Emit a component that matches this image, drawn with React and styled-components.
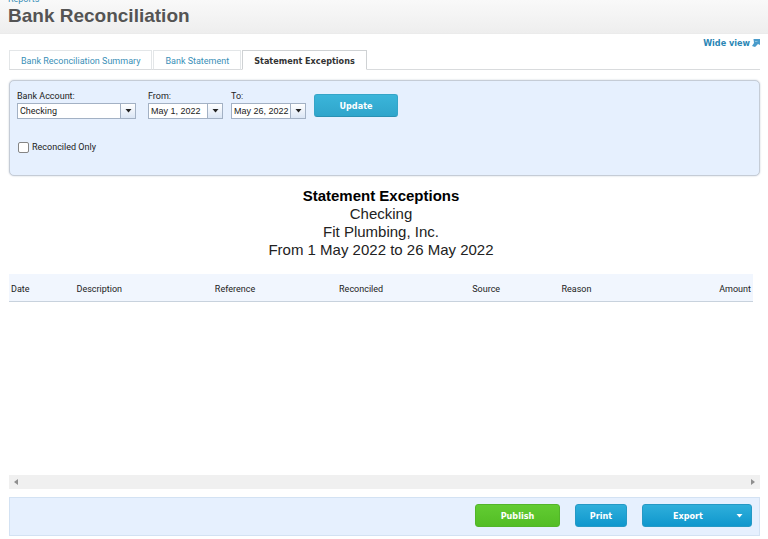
import React from "react";
import styled, { createGlobalStyle } from "styled-components";

const colours = {
  link: "#3a8fb7",
  text: "#222222",
  panel: "#e6f0fe",
  panelBorder: "#c5ccd6",
  fieldBorder: "#a3b1c4",
};

const boldFont = `"DejaVu Sans Condensed", "DejaVu Sans", sans-serif`;
const arialFont = `"Liberation Sans", Arial, sans-serif`;

const GlobalStyle = createGlobalStyle`
  * {
    box-sizing: border-box;
  }

  body {
    margin: 0;
    background: #ffffff;
    color: ${colours.text};
    font-family: Roboto, sans-serif;
    font-size: 9px;
    line-height: 12px;
  }

  button,
  input,
  select {
    font: inherit;
    color: inherit;
    margin: 0;
  }
`;

const Header = styled.header`
  display: flex;
  flex-direction: column;
  justify-content: flex-end;
  height: 34px;
  padding: 0 8px 6px;
  overflow: hidden;
  background: linear-gradient(#f9f9f9, #eeeeee);
  border-bottom: 1px solid #ebebeb;
`;

const Breadcrumb = styled.a`
  flex: none;
  color: ${colours.link};
  line-height: 10px;
  text-decoration: none;
`;

const Title = styled.h1`
  flex: none;
  margin: 0;
  color: #545454;
  font-family: ${arialFont};
  font-size: 19px;
  line-height: 23px;
`;

const Content = styled.main`
  padding: 0 8px 0 9px;
`;

const TopLinks = styled.div`
  display: flex;
  justify-content: flex-end;
  height: 16px;
  padding-top: 3px;
`;

const WideView = styled.a`
  display: flex;
  align-items: center;
  gap: 2px;
  height: 12px;
  color: #2a86b5;
  font-family: ${boldFont};
  font-weight: bold;
  text-decoration: none;
`;

const Tabs = styled.nav`
  display: flex;
  gap: 1px;
  border-bottom: 1px solid #d9dbdd;
`;

const Tab = styled.a`
  height: 20px;
  margin-bottom: -1px;
  padding: 4px 11px 0;
  border: 1px solid ${(props) => (props.$active ? "#cfd2d4" : "#e3e6e8")};
  border-bottom-color: ${(props) => (props.$active ? "#ffffff" : "#d9dbdd")};
  background: #ffffff;
  color: ${(props) => (props.$active ? "#333333" : colours.link)};
  font-family: ${(props) => (props.$active ? boldFont : "inherit")};
  font-weight: ${(props) => (props.$active ? "bold" : "normal")};
  text-decoration: none;
  white-space: nowrap;
`;

const Filters = styled.form`
  height: 96px;
  margin-top: 10px;
  padding: 9px 7px;
  border: 1px solid ${colours.panelBorder};
  border-radius: 5px;
  background: ${colours.panel};
  box-shadow: 0 0 2px ${colours.panelBorder};
`;

const FilterRow = styled.div`
  display: flex;
  align-items: flex-start;
`;

const Field = styled.div`
  display: flex;
  flex-direction: column;
  gap: 1px;
  width: ${(props) => props.$width};
  margin-right: ${(props) => props.$gap};

  label {
    white-space: nowrap;
  }
`;

const Combo = styled.div`
  display: flex;
  position: relative;
  height: 16px;
  border: 1px solid ${colours.fieldBorder};
  background: #ffffff;
`;

const DateInput = styled.input`
  flex: 1;
  min-width: 0;
  padding: 0 0 0 2px;
  border: 0;
  background: transparent;
  font-family: ${arialFont};
`;

const Select = styled.select`
  width: 100%;
  padding: 0 16px 0 2px;
  border: 0;
  background: transparent;
  appearance: none;
`;

const ArrowButton = styled.button`
  display: flex;
  align-items: center;
  justify-content: center;
  width: 15px;
  padding: 0;
  border: 0;
  border-left: 1px solid ${colours.fieldBorder};
  background: linear-gradient(#ffffff, #dbe6f5);
`;

const SelectArrow = styled(ArrowButton).attrs({ as: "span" })`
  position: absolute;
  top: 0;
  right: 0;
  bottom: 0;
  pointer-events: none;
`;

const Button = styled.button`
  display: flex;
  align-items: center;
  justify-content: center;
  width: ${(props) => props.$width};
  height: 23px;
  padding: 0;
  border: 1px solid ${(props) => (props.$green ? "#52b52a" : "#2599c5")};
  border-radius: 3px;
  background: ${(props) =>
    props.$green
      ? "linear-gradient(#62cc32, #53bd25)"
      : "linear-gradient(#2fafdb, #0f97cd)"};
  color: #ffffff;
  font-family: ${boldFont};
  font-weight: bold;
`;

const UpdateButton = styled(Button)`
  margin-top: 4px;
  border-color: #35a5c8;
  border-bottom-color: #2a91b3;
  background: linear-gradient(#3bb5da, #2fa5cb);
`;

const ExportLabel = styled.span`
  flex: 1;
  padding-left: 6px;
`;

const ExportArrow = styled.span`
  display: flex;
  justify-content: center;
  width: 24px;
`;

const CheckLabel = styled.label`
  display: flex;
  align-items: center;
  gap: 3px;
  margin: 22px 0 0 1px;

  input {
    width: 11px;
    height: 11px;
    border: 1px solid #858585;
    border-radius: 2px;
    background: #ffffff;
    appearance: none;
  }
`;

const Report = styled.section`
  height: 299px;
  padding: 11px 7px 0 0;
`;

const ReportHeading = styled.div`
  color: #222222;
  font-family: ${arialFont};
  font-size: 15px;
  line-height: 18px;
  text-align: center;

  h2 {
    margin: 0;
    color: #000000;
    font-size: 15px;
  }

  p {
    margin: 0;
  }
`;

const Table = styled.table`
  width: 100%;
  margin-top: 15px;
  table-layout: fixed;
  border-collapse: collapse;
  background: #f1f6fe;
`;

const HeadCell = styled.th`
  width: ${(props) => props.$width};
  height: 27px;
  padding: 4px 2px 0;
  border-bottom: 1px solid #c8d2dd;
  font-weight: normal;
  text-align: ${(props) => props.$align || "left"};
`;

const ScrollBar = styled.div`
  display: flex;
  align-items: center;
  justify-content: space-between;
  height: 14px;
  background: #f0f0f0;
`;

const ScrollButton = styled.button`
  display: flex;
  align-items: center;
  justify-content: center;
  width: 14px;
  height: 14px;
  padding: 0;
  border: 0;
  background: transparent;
`;

const Footer = styled.footer`
  display: flex;
  justify-content: flex-end;
  gap: 15px;
  height: 39px;
  margin-top: 8px;
  padding: 6px 7px;
  border: 1px solid #d3e2f3;
  background: ${colours.panel};
`;

const columns = [
  { title: "Date", width: "8.8%" },
  { title: "Description", width: "18.6%" },
  { title: "Reference", width: "16.7%" },
  { title: "Reconciled", width: "17.9%" },
  { title: "Source", width: "12%" },
  { title: "Reason", width: "13%" },
  { title: "Amount", width: "13%", align: "right" },
];

const DownArrow = ({ fill = "#222222" }) => (
  <svg width="7" height="4" viewBox="0 0 7 4" aria-hidden="true">
    <path d="M0.5 0h6L3.5 3.6z" fill={fill} />
  </svg>
);

const PopOutIcon = () => (
  <svg width="8" height="8" viewBox="0 0 8 8" aria-hidden="true">
    <path d="M1.5 0H8v6L6 5 3 8 0 7 2 4z" fill="#4a9ccb" />
    <path d="M3 2.5h2.5" stroke="#9accE6" strokeWidth="0.8" />
  </svg>
);

const DateField = ({ id, label, value, gap }) => (
  <Field $width="75px" $gap={gap}>
    <label htmlFor={id}>{label}</label>
    <Combo>
      <DateInput id={id} type="text" defaultValue={value} />
      <ArrowButton type="button" aria-label="Pick a date">
        <DownArrow />
      </ArrowButton>
    </Combo>
  </Field>
);

const App = () => {
  return (
    <>
      <GlobalStyle />
      <Header>
        <Breadcrumb href="#reports">Reports</Breadcrumb>
        <Title>Bank Reconciliation</Title>
      </Header>
      <Content>
        <TopLinks>
          <WideView href="#wide">
            Wide view
            <PopOutIcon />
          </WideView>
        </TopLinks>
        <Tabs>
          <Tab href="#summary">Bank Reconciliation Summary</Tab>
          <Tab href="#statement">Bank Statement</Tab>
          <Tab href="#exceptions" $active>
            Statement Exceptions
          </Tab>
        </Tabs>

        <Filters onSubmit={(e) => e.preventDefault()}>
          <FilterRow>
            <Field $width="119px" $gap="12px">
              <label htmlFor="account">Bank Account:</label>
              <Combo>
                <Select id="account">
                  <option>Checking</option>
                </Select>
                <SelectArrow>
                  <DownArrow />
                </SelectArrow>
              </Combo>
            </Field>
            <DateField id="from" label="From:" value="May 1, 2022" gap="8px" />
            <DateField id="to" label="To:" value="May 26, 2022" gap="8px" />
            <UpdateButton type="submit" $width="84px">
              Update
            </UpdateButton>
          </FilterRow>
          <CheckLabel>
            <input type="checkbox" />
            Reconciled Only
          </CheckLabel>
        </Filters>

        <Report>
          <ReportHeading>
            <h2>Statement Exceptions</h2>
            <p>Checking</p>
            <p>Fit Plumbing, Inc.</p>
            <p>From 1 May 2022 to 26 May 2022</p>
          </ReportHeading>
          <Table>
            <thead>
              <tr>
                {columns.map((column) => (
                  <HeadCell
                    key={column.title}
                    $width={column.width}
                    $align={column.align}
                  >
                    {column.title}
                  </HeadCell>
                ))}
              </tr>
            </thead>
          </Table>
        </Report>

        <ScrollBar>
          <ScrollButton type="button" aria-label="Scroll left">
            <svg width="4" height="6" viewBox="0 0 4 6">
              <path d="M4 0v6L0 3z" fill="#8f8f8f" />
            </svg>
          </ScrollButton>
          <ScrollButton type="button" aria-label="Scroll right">
            <svg width="4" height="6" viewBox="0 0 4 6">
              <path d="M0 0v6l4-3z" fill="#8f8f8f" />
            </svg>
          </ScrollButton>
        </ScrollBar>

        <Footer>
          <Button type="button" $width="85px" $green>
            Publish
          </Button>
          <Button type="button" $width="52px">
            Print
          </Button>
          <Button type="button" $width="110px">
            <ExportLabel>Export</ExportLabel>
            <ExportArrow>
              <DownArrow fill="#ffffff" />
            </ExportArrow>
          </Button>
        </Footer>
      </Content>
    </>
  );
};

export default App;
